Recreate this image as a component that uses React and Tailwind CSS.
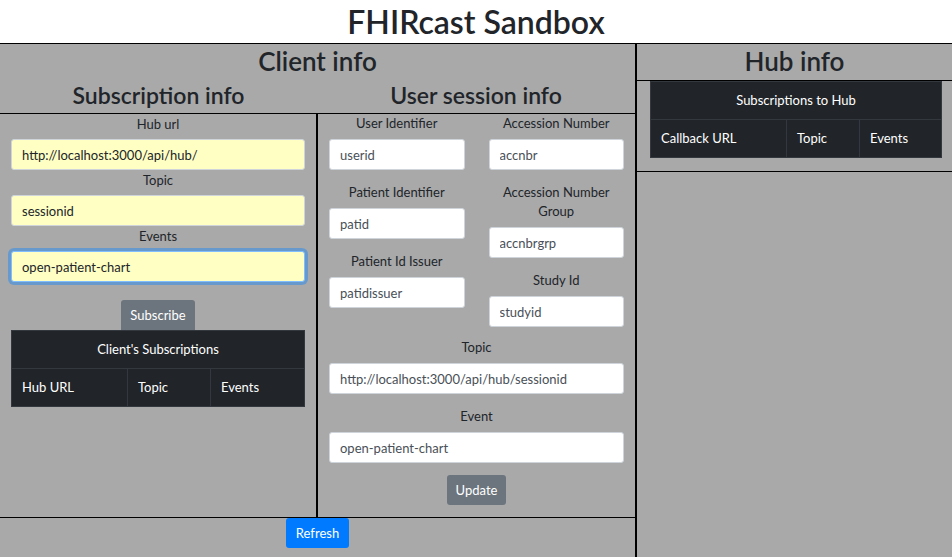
import React from 'react';

const Field = ({ label, value, className = '' }) => (
  <div className={className}>
    <div className="text-center text-[13px] leading-[19px] mb-[6px] text-[#212529]">{label}</div>
    <input
      readOnly
      value={value}
      className="w-full h-[31px] px-[10px] text-[13px] rounded-[3px] border border-[#ced4da] bg-white text-[#495057] outline-none"
    />
  </div>
);

const DarkTable = ({ title, cols }) => (
  <div className="bg-[#212529] border border-[#32383e] text-white text-[13px]">
    <div className="h-[38px] pt-[1px] flex items-center justify-center border-b border-[#32383e]">{title}</div>
    <div className="flex h-[37px]">
      {cols.map((c, i) => (
        <div
          key={c.name}
          className={'flex items-center pt-[1px] pl-[10px] ' + c.w + (i > 0 ? ' border-l border-[#32383e]' : '')}
        >
          {c.name}
        </div>
      ))}
    </div>
  </div>
);

export default function App() {
  return (
    <div className="min-h-screen flex flex-col bg-[#a9a9a9] font-['Lato',sans-serif] text-[#212529]">
      <div className="h-[43px] bg-white flex items-center justify-center">
        <h1 className="text-[32px] leading-none font-semibold">FHIRcast Sandbox</h1>
      </div>

      <div className="flex-1 flex border-t border-black">
        {/* client */}
        <div className="w-[636px] border-r border-black">
          <h2 className="h-[36px] pb-[1px] flex items-center justify-center text-[26px] font-semibold">Client info</h2>

          <div className="flex border-b border-black">
            {/* subscription */}
            <div className="w-[317px] flex flex-col">
              <h3 className="h-[33px] pb-[3px] flex items-center justify-center text-[23px] font-semibold">Subscription info</h3>
              <div className="flex-1 border-t border-r border-black px-[11px]">
                <div className="text-center text-[13px] leading-[20px] mb-[5px]">Hub url</div>
                <input readOnly value="http://localhost:3000/api/hub/" className="w-full h-[31px] px-[10px] text-[13px] rounded-[3px] border border-[#ced4da] bg-[#ffffc4] outline-none" />
                <div className="text-center text-[13px] leading-[20px] mb-[5px]">Topic</div>
                <input readOnly value="sessionid" className="w-full h-[31px] px-[10px] text-[13px] rounded-[3px] border border-[#ced4da] bg-[#ffffc4] outline-none" />
                <div className="text-center text-[13px] leading-[20px] mb-[5px]">Events</div>
                <input readOnly value="open-patient-chart" className="w-full h-[31px] px-[10px] text-[13px] rounded-[3px] border border-[#80bdff] ring-[3px] ring-[#3d8fe6]/60 bg-[#ffffc4] outline-none" />
                <div className="flex justify-center mt-[18px]">
                  <button className="h-[30px] pt-[2px] px-[9px] bg-[#6c757d] text-white text-[13px] rounded-t-[3px]">Subscribe</button>
                </div>
                <DarkTable
                  title="Client's Subscriptions"
                  cols={[
                    { name: 'Hub URL', w: 'w-[115px]' },
                    { name: 'Topic', w: 'w-[83px]' },
                    { name: 'Events', w: 'flex-1' },
                  ]}
                />
              </div>
            </div>

            {/* user session */}
            <div className="flex-1 flex flex-col">
              <h3 className="h-[33px] pb-[3px] flex items-center justify-center text-[23px] font-semibold">User session info</h3>
              <div className="flex-1 border-t border-l border-black px-[11px] pb-[12px]">
                <div className="grid grid-cols-2 gap-x-[24px]">
                  <div>
                    <Field className="mb-[13px]" label="User Identifier" value="userid" />
                    <Field className="mb-[13px]" label="Patient Identifier" value="patid" />
                    <Field className="mb-[11px]" label="Patient Id Issuer" value="patidissuer" />
                  </div>
                  <div>
                    <Field className="mb-[13px]" label="Accession Number" value="accnbr" />
                    <Field className="mb-[13px]" label="Accession Number Group" value="accnbrgrp" />
                    <Field className="mb-[11px]" label="Study Id" value="studyid" />
                  </div>
                </div>
                <Field className="mb-[13px]" label="Topic" value="http://localhost:3000/api/hub/sessionid" />
                <Field label="Event" value="open-patient-chart" />
                <div className="flex justify-center mt-[12px]">
                  <button className="h-[30px] pt-[2px] px-[9px] bg-[#6c757d] text-white text-[13px] rounded-[3px]">Update</button>
                </div>
              </div>
            </div>
          </div>

          <div className="flex justify-center">
            <button className="h-[30px] pt-[2px] px-[10px] bg-[#007bff] text-white text-[13px] rounded-[3px]">Refresh</button>
          </div>
        </div>

        {/* hub */}
        <div className="flex-1 border-l border-black">
          <h2 className="h-[36px] pb-[1px] flex items-center justify-center text-[26px] font-semibold">Hub info</h2>
          <div className="border-t border-b border-black pl-[13px] pr-[10px] pb-[13px]">
            <DarkTable
              title="Subscriptions to Hub"
              cols={[
                { name: 'Callback URL', w: 'w-[135px]' },
                { name: 'Topic', w: 'w-[73px]' },
                { name: 'Events', w: 'flex-1' },
              ]}
            />
          </div>
        </div>
      </div>
    </div>
  );
}
